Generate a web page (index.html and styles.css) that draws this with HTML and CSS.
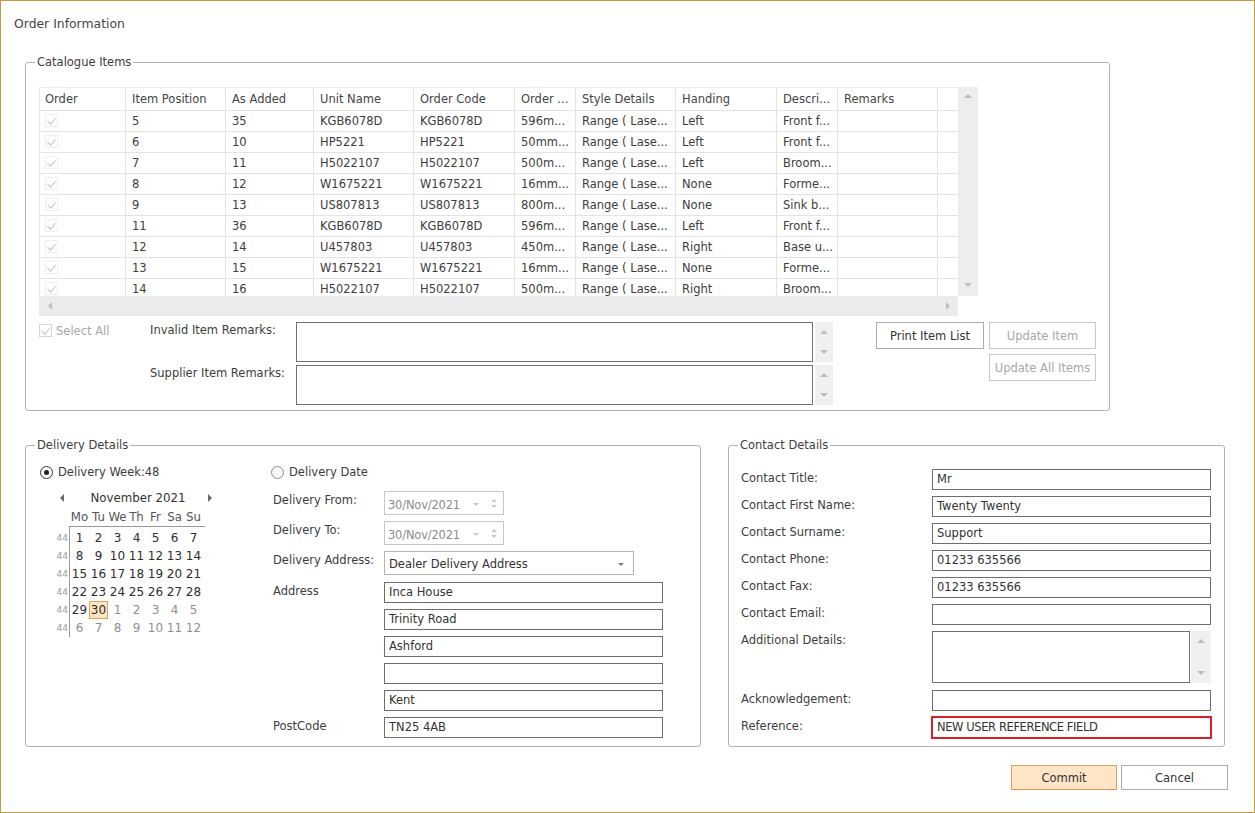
FILE: index.html
```html
<!DOCTYPE html>
<html>
<head>
<meta charset="utf-8">
<title>Order Information</title>
<link rel="stylesheet" href="styles.css">
</head>
<body>
<div class="window">
  <div class="title">Order Information</div>

  <fieldset class="group catalogue">
    <legend>Catalogue Items</legend>
    <div class="cat-body">
      <div class="grid">
        <div class="grid-view">
          <table class="items">
            <thead>
              <tr>
                <th class="c1">Order</th><th class="c2">Item Position</th><th class="c3">As Added</th><th class="c4">Unit Name</th><th class="c5">Order Code</th><th class="c6">Order ...</th><th class="c7">Style Details</th><th class="c8">Handing</th><th class="c9">Descri...</th><th class="c10">Remarks</th><th class="c11"></th>
              </tr>
            </thead>
            <tbody>
              <tr><td class="chkcell"><span class="gchk"></span></td><td>5</td><td>35</td><td>KGB6078D</td><td>KGB6078D</td><td>596m...</td><td>Range ( Lase...</td><td>Left</td><td>Front f...</td><td></td><td></td></tr>
              <tr><td class="chkcell"><span class="gchk"></span></td><td>6</td><td>10</td><td>HP5221</td><td>HP5221</td><td>50mm...</td><td>Range ( Lase...</td><td>Left</td><td>Front f...</td><td></td><td></td></tr>
              <tr><td class="chkcell"><span class="gchk"></span></td><td>7</td><td>11</td><td>H5022107</td><td>H5022107</td><td>500m...</td><td>Range ( Lase...</td><td>Left</td><td>Broom...</td><td></td><td></td></tr>
              <tr><td class="chkcell"><span class="gchk"></span></td><td>8</td><td>12</td><td>W1675221</td><td>W1675221</td><td>16mm...</td><td>Range ( Lase...</td><td>None</td><td>Forme...</td><td></td><td></td></tr>
              <tr><td class="chkcell"><span class="gchk"></span></td><td>9</td><td>13</td><td>US807813</td><td>US807813</td><td>800m...</td><td>Range ( Lase...</td><td>None</td><td>Sink b...</td><td></td><td></td></tr>
              <tr><td class="chkcell"><span class="gchk"></span></td><td>11</td><td>36</td><td>KGB6078D</td><td>KGB6078D</td><td>596m...</td><td>Range ( Lase...</td><td>Left</td><td>Front f...</td><td></td><td></td></tr>
              <tr><td class="chkcell"><span class="gchk"></span></td><td>12</td><td>14</td><td>U457803</td><td>U457803</td><td>450m...</td><td>Range ( Lase...</td><td>Right</td><td>Base u...</td><td></td><td></td></tr>
              <tr><td class="chkcell"><span class="gchk"></span></td><td>13</td><td>15</td><td>W1675221</td><td>W1675221</td><td>16mm...</td><td>Range ( Lase...</td><td>None</td><td>Forme...</td><td></td><td></td></tr>
              <tr><td class="chkcell"><span class="gchk"></span></td><td>14</td><td>16</td><td>H5022107</td><td>H5022107</td><td>500m...</td><td>Range ( Lase...</td><td>Right</td><td>Broom...</td><td></td><td></td></tr>
            </tbody>
          </table>
        </div>
        <div class="vscroll"><i class="tri up"></i><i class="tri down"></i></div>
        <div class="hscroll"><i class="tri left"></i><i class="tri right"></i></div>
        <div class="corner"></div>
      </div>

      <div class="lower">
        <div class="remarks">
          <label class="selall"><span class="sbox"></span>Select All</label>
          <span class="rlabel">Invalid Item Remarks:</span>
          <div class="memo"></div>
          <div class="mscroll"><i class="tri up"></i><i class="tri down"></i></div>
          <span></span>
          <span class="rlabel">Supplier Item Remarks:</span>
          <div class="memo"></div>
          <div class="mscroll"><i class="tri up"></i><i class="tri down"></i></div>
        </div>
        <div class="side-buttons">
          <button class="btn print">Print Item List</button>
          <div class="btn-col">
            <button class="btn upd" disabled>Update Item</button>
            <button class="btn upd" disabled>Update All Items</button>
          </div>
        </div>
      </div>
    </div>
  </fieldset>

  <div class="bottom-row">
    <fieldset class="group delivery">
      <legend>Delivery Details</legend>
      <div class="del-body">
        <div class="week-col">
          <label class="radio"><span class="rb on"></span>Delivery Week:48</label>
          <div class="calendar">
            <div class="cal-nav"><i class="tri left dark"></i><span class="month">November 2021</span><i class="tri right dark"></i></div>
            <div class="cal-head"><span>Mo</span><span>Tu</span><span>We</span><span>Th</span><span>Fr</span><span>Sa</span><span>Su</span></div>
            <div class="cal-body">
              <div class="weeks"><span>44</span><span>44</span><span>44</span><span>44</span><span>44</span><span>44</span></div>
              <div class="days">
                <span>1</span><span>2</span><span>3</span><span>4</span><span>5</span><span>6</span><span>7</span>
                <span>8</span><span>9</span><span>10</span><span>11</span><span>12</span><span>13</span><span>14</span>
                <span>15</span><span>16</span><span>17</span><span>18</span><span>19</span><span>20</span><span>21</span>
                <span>22</span><span>23</span><span>24</span><span>25</span><span>26</span><span>27</span><span>28</span>
                <span>29</span><span class="sel">30</span><span class="other">1</span><span class="other">2</span><span class="other">3</span><span class="other">4</span><span class="other">5</span>
                <span class="other">6</span><span class="other">7</span><span class="other">8</span><span class="other">9</span><span class="other">10</span><span class="other">11</span><span class="other">12</span>
              </div>
            </div>
          </div>
        </div>
        <div class="date-col">
          <label class="radio"><span class="rb"></span>Delivery Date</label>
          <div class="dform">
            <span class="flabel">Delivery From:</span>
            <div class="datebox"><span class="dtext">30/Nov/2021</span><i class="tri down faint dd"></i><span class="spin"><i class="tri up faint sm"></i><i class="tri down faint sm"></i></span></div>
            <span class="flabel">Delivery To:</span>
            <div class="datebox"><span class="dtext">30/Nov/2021</span><i class="tri down faint dd"></i><span class="spin"><i class="tri up faint sm"></i><i class="tri down faint sm"></i></span></div>
            <span class="flabel">Delivery Address:</span>
            <div class="combo"><span>Dealer Delivery Address</span><i class="tri down mid"></i></div>
            <span class="flabel addr-first">Address</span>
            <div class="tb addr addr-first">Inca House</div>
            <span></span><div class="tb addr">Trinity Road</div>
            <span></span><div class="tb addr">Ashford</div>
            <span></span><div class="tb addr"></div>
            <span></span><div class="tb addr">Kent</div>
            <span class="flabel">PostCode</span><div class="tb addr">TN25 4AB</div>
          </div>
        </div>
      </div>
    </fieldset>

    <fieldset class="group contact">
      <legend>Contact Details</legend>
      <div class="cform">
        <span class="flabel">Contact Title:</span><div class="tb">Mr</div>
        <span class="flabel">Contact First Name:</span><div class="tb">Twenty Twenty</div>
        <span class="flabel">Contact Surname:</span><div class="tb">Support</div>
        <span class="flabel">Contact Phone:</span><div class="tb">01233 635566</div>
        <span class="flabel">Contact Fax:</span><div class="tb">01233 635566</div>
        <span class="flabel">Contact Email:</span><div class="tb"></div>
        <span class="flabel">Additional Details:</span>
        <div class="memo-wrap"><div class="memo"></div><div class="mscroll wide"><i class="tri up"></i><i class="tri down"></i></div></div>
        <span class="flabel">Acknowledgement:</span><div class="tb"></div>
        <span class="flabel">Reference:</span><div class="tb ref">NEW USER REFERENCE FIELD</div>
      </div>
    </fieldset>
  </div>

  <div class="actions">
    <button class="btn commit">Commit</button>
    <button class="btn cancel">Cancel</button>
  </div>
</div>
</body>
</html>
```
FILE: styles.css
```css
* { box-sizing: border-box; }

body {
  margin: 0;
  background: #fff;
  font-family: "DejaVu Sans", Verdana, sans-serif;
  font-size: 11.5px;
  color: #404040;
}

.window {
  width: 1255px;
  height: 813px;
  border: 1px solid #c99a3e;
  background: #fff;
}

.title {
  height: 32px;
  padding: 14px 0 0 13px;
  font-size: 12.4px;
  line-height: 18px;
  color: #454545;
}

/* group boxes */
.group {
  margin: 0;
  padding: 0;
  min-width: 0;
  border: 1px solid #b3b3b3;
  border-radius: 3px;
}
.group legend {
  margin-left: 9px;
  padding: 0 2px;
  line-height: 14px;
  color: #404040;
}

.catalogue {
  margin: 22px 0 0 24px;
  width: 1085px;
  height: 356px;
}
.cat-body {
  padding: 18px 0 0 13px;
}

/* data grid */
.grid {
  display: grid;
  grid-template-columns: 919px 20px;
  grid-template-rows: 209px 20px;
  width: 939px;
}
.grid-view {
  overflow: hidden;
  border-left: 1px solid #e6e6e6;
}
.items {
  width: 919px;
  table-layout: fixed;
  border-collapse: separate;
  border-spacing: 0;
}
.items th, .items td {
  padding: 0 0 0 6px;
  border-right: 1px solid #e3e3e3;
  border-bottom: 1px solid #e3e3e3;
  white-space: nowrap;
  overflow: hidden;
  text-align: left;
  font-weight: normal;
  color: #3d3d3d;
}
.items th {
  line-height: 22px;
  border-top: 1px solid #ececec;
  color: #444;
}
.items th.c1 { padding-left: 5px; }
.items td { line-height: 20px; }
.items .c1 { width: 86px; }
.items .c2 { width: 100px; }
.items .c3 { width: 88px; }
.items .c4 { width: 100px; }
.items .c5 { width: 101px; }
.items .c6 { width: 61px; }
.items .c7 { width: 100px; }
.items .c8 { width: 101px; }
.items .c9 { width: 61px; }
.items .c10 { width: 100px; }
.items .c11 { width: 21px; }

.items td.chkcell { padding-left: 5px; }
.gchk {
  display: inline-block;
  vertical-align: middle;
  width: 13px;
  height: 13px;
  margin-top: -2px;
  border: 1px solid #efefef;
  position: relative;
}
.gchk::after, .sbox::after {
  content: "";
  position: absolute;
  left: 3px;
  top: 1px;
  width: 4px;
  height: 7px;
  border-right: 1.5px solid #c2c2c2;
  border-bottom: 1.5px solid #c2c2c2;
  transform: rotate(40deg);
}

.vscroll {
  background: #ededed;
  display: flex;
  flex-direction: column;
  justify-content: space-between;
  align-items: center;
  padding: 7px 0 9px;
}
.hscroll {
  background: #ebebeb;
  display: flex;
  justify-content: space-between;
  align-items: center;
  padding: 0 8px 0 9px;
}
.corner { background: #fff; }

/* triangles */
.tri {
  display: block;
  width: 0;
  height: 0;
  border-style: solid;
  border-color: transparent;
}
.tri.up { border-width: 0 4px 4px 4px; border-bottom-color: #bdbdbd; }
.tri.down { border-width: 4px 4px 0 4px; border-top-color: #bdbdbd; }
.tri.left { border-width: 4px 4px 4px 0; border-right-color: #bdbdbd; }
.tri.right { border-width: 4px 0 4px 4px; border-left-color: #bdbdbd; }
.tri.left.dark { border-right-color: #6a6a6a; border-width: 4px 4px 4px 0; }
.tri.right.dark { border-left-color: #6a6a6a; border-width: 4px 0 4px 4px; }
.tri.down.mid { border-top-color: #7a7a7a; border-width: 3px 3px 0 3px; }
.tri.faint.up { border-bottom-color: #c8c8c8; }
.tri.faint.down { border-top-color: #c8c8c8; }
.tri.sm { border-left-width: 3px; border-right-width: 3px; }
.tri.sm.up { border-bottom-width: 3px; }
.tri.sm.down { border-top-width: 3px; }
.tri.dd { border-width: 3px 3px 0 3px; }

/* lower part of catalogue */
.lower {
  display: flex;
  margin-top: 6px;
}
.remarks {
  display: grid;
  grid-template-columns: 111px 146px 517px 20px;
  grid-template-rows: 40px 40px;
  row-gap: 3px;
}
.selall {
  display: flex;
  align-items: center;
  height: 17px;
  color: #a8a8a8;
}
.sbox {
  position: relative;
  width: 13px;
  height: 13px;
  border: 1px solid #d6d6d6;
  margin-right: 4px;
}
.rlabel {
  line-height: 17px;
  color: #3d3d3d;
}
.memo {
  border: 1px solid #707070;
  background: #fff;
}
.mscroll {
  margin-left: 2px;
  background: #f0f0f0;
  display: flex;
  flex-direction: column;
  justify-content: space-between;
  align-items: center;
  padding: 8px 0 8px;
}

.side-buttons {
  display: flex;
  gap: 5px;
  margin-left: 43px;
}
.btn-col {
  display: flex;
  flex-direction: column;
  gap: 5px;
}
.btn {
  font-family: inherit;
  font-size: 11.5px;
  background: #fff;
  border: 1px solid #acacac;
  color: #333;
  padding: 0;
  height: 27px;
}
.print { width: 108px; }
.upd { width: 107px; color: #a8a8a8; border-color: #c9c9c9; }

/* bottom row */
.bottom-row {
  display: flex;
  gap: 27px;
  margin: 27px 0 0 24px;
}
.delivery { width: 676px; height: 309px; }
.contact { width: 497px; height: 309px; }

.del-body {
  display: flex;
  padding: 12px 0 0 14px;
}
.week-col { width: 231px; }

.radio {
  display: flex;
  align-items: center;
  height: 16px;
  line-height: 16px;
  color: #3d3d3d;
}
.rb {
  width: 13px;
  height: 13px;
  border-radius: 50%;
  border: 1px solid #8a8a8a;
  background: #f7f7f7;
  margin-right: 5px;
  display: flex;
  align-items: center;
  justify-content: center;
}
.rb.on { border-color: #333; background: #fff; }
.rb.on::after {
  content: "";
  width: 5px;
  height: 5px;
  border-radius: 50%;
  background: #222;
}

/* calendar */
.calendar {
  margin: 10px 0 0 15px;
  width: 160px;
}
.cal-nav {
  display: flex;
  align-items: center;
  justify-content: space-between;
  height: 16px;
  padding: 0 3px 0 5px;
  font-size: 11.8px;
  color: #333;
}
.month { margin-left: 4px; }
.cal-head {
  display: grid;
  grid-template-columns: repeat(7, 19px);
  margin: 3px 0 0 15px;
  height: 16px;
  line-height: 16px;
  font-size: 11.8px;
  color: #555;
  text-align: center;
}
.cal-body {
  display: flex;
  margin-top: 1px;
}
.weeks {
  width: 14px;
  display: flex;
  flex-direction: column;
  padding-top: 3px;
}
.weeks span {
  height: 18px;
  line-height: 18px;
  font-size: 9px;
  color: #9a9a9a;
  text-align: right;
  padding-right: 1px;
}
.days {
  display: grid;
  grid-template-columns: repeat(7, 19px);
  grid-auto-rows: 18px;
  width: 136px;
  padding-top: 2px;
  border-top: 1px solid #9a9a9a;
  border-left: 1px solid #9a9a9a;
  font-size: 12px;
  color: #2e2e2e;
  text-align: center;
}
.days span { line-height: 18px; }
.days .other { color: #8f8f8f; }
.days .sel {
  background: #fde4c2;
  border: 1px solid #e1a052;
  line-height: 16px;
}

/* delivery date form */
.date-col { flex: 1; }
.dform {
  display: grid;
  grid-template-columns: 113px auto;
  row-gap: 6px;
  margin-top: 11px;
  justify-items: start;
}
.flabel {
  line-height: 18px;
  padding-left: 2px;
  color: #3d3d3d;
  white-space: nowrap;
}
.datebox {
  width: 120px;
  height: 24px;
  border: 1px solid #c6c6c6;
  display: flex;
  align-items: center;
  padding: 3px 6px 0 3px;
  color: #8c8c8c;
}
.dtext { letter-spacing: -0.2px; }
.datebox .dd { margin-left: auto; margin-right: 12px; }
.spin {
  display: flex;
  flex-direction: column;
  gap: 3px;
  margin-top: -3px;
}
.combo {
  width: 250px;
  height: 24px;
  border: 1px solid #b4b4b4;
  display: flex;
  align-items: center;
  justify-content: space-between;
  padding: 2px 9px 0 4px;
  color: #333;
}
.tb {
  width: 279px;
  height: 21px;
  border: 1px solid #6e6e6e;
  padding-left: 4px;
  line-height: 19px;
  color: #333;
  white-space: nowrap;
}
.addr-first { margin-top: 1px; }

/* contact */
.cform {
  display: grid;
  grid-template-columns: 191px 279px;
  row-gap: 6px;
  padding: 17px 0 0 12px;
}
.cform .flabel { padding-left: 0; }
.memo-wrap {
  display: flex;
  height: 52px;
  margin-bottom: 1px;
}
.memo-wrap .memo { flex: 1; }
.memo-wrap .mscroll { width: 20px; margin-left: 1px; }
.tb.ref {
  border: 1px solid #d9202a;
  outline: 1px solid #d9202a;
  letter-spacing: -0.4px;
}

/* actions */
.actions {
  display: flex;
  justify-content: flex-end;
  gap: 4px;
  margin-top: 18px;
  padding-right: 26px;
}
.commit, .cancel { height: 25px; }
.commit {
  width: 106px;
  background: #fde5c6;
  border-color: #d7a25a;
}
.cancel { width: 107px; }
```
